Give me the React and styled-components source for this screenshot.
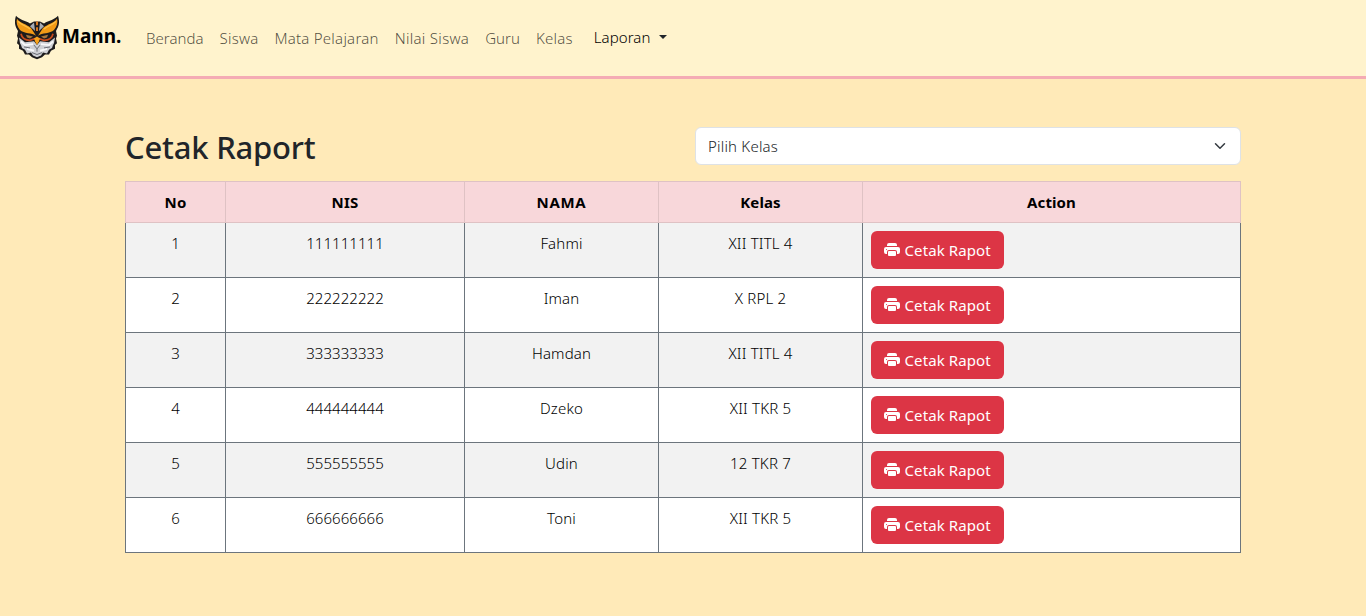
import React from "react";
import styled, { createGlobalStyle } from "styled-components";
import { BsPrinterFill } from "react-icons/bs";

const GlobalStyle = createGlobalStyle`
  *, *::before, *::after { box-sizing: border-box; }
  body {
    margin: 0;
    min-height: 100vh;
    background: #ffeab8;
    color: #212529;
    font-family: "Noto Sans", "Open Sans", sans-serif;
    font-size: 15px;
    line-height: 24px;
  }
`;

const Navbar = styled.nav`
  display: flex;
  align-items: center;
  height: 79px;
  padding: 0 12px;
  background: #fff3cd;
  border-bottom: 3px solid #f4abb4;
`;

const Brand = styled.a`
  display: flex;
  align-items: center;
  width: 126px;
  color: #000;
  font-size: 19px;
  font-weight: 700;
  line-height: 30px;
`;

const BrandName = styled.span`
  margin-top: -4px;
`;

const NavList = styled.ul`
  display: flex;
  list-style: none;
  margin: 0;
  padding: 0;
`;

const NavLink = styled.a`
  display: block;
  padding: 8px;
  color: rgba(0, 0, 0, 0.7);
  font-weight: 350;
  white-space: nowrap;
  letter-spacing: ${(p) => p.$spacing || 0}px;
`;

const Dropdown = styled.button`
  display: flex;
  align-items: center;
  margin: 0 0 2px 5px;
  padding: 6px 8px;
  border: 0;
  background: none;
  color: #000;
  font: inherit;
  font-weight: 350;
  letter-spacing: 0.08px;
`;

const Caret = styled.span`
  margin-left: 8.5px;
  border-top: 4.8px solid #212529;
  border-left: 4.8px solid transparent;
  border-right: 4.8px solid transparent;
`;

const Container = styled.main`
  width: 1116px;
  margin: 48px auto 0;
`;

const Toolbar = styled.div`
  display: grid;
  grid-template-columns: 546px 546px;
  column-gap: 24px;
  height: 54px;
`;

const Title = styled.h2`
  margin: 0;
  padding-top: 1px;
  font-size: 31px;
  font-weight: 500;
  line-height: 38px;
  letter-spacing: -0.22px;
`;

const Select = styled.div`
  display: flex;
  align-items: center;
  justify-content: space-between;
  height: 38px;
  padding: 0 12px;
  border: 1px solid #dee2e6;
  border-radius: 6px;
  background: #fff;
  font-weight: 350;
  letter-spacing: 0.2px;
`;

const Table = styled.table`
  width: 1116px;
  table-layout: fixed;
  border-collapse: collapse;
  text-align: center;
`;

const HeadCell = styled.th`
  height: 41px;
  padding: 8px;
  border: 1px solid #dfc2c4;
  background: #f8d7da;
  color: #000;
  font-weight: 700;
  letter-spacing: ${(p) => p.$spacing || 0}px;
`;

const Row = styled.tr`
  background: #fff;
  &:nth-child(odd) { background: #f2f2f2; }
`;

const Cell = styled.td`
  height: 55px;
  padding: ${(p) => (p.$action ? "8px" : "8px 8px 22px")};
  border: 1px solid #6c757d;
  color: #000;
  font-weight: 350;
  letter-spacing: ${(p) => p.$spacing || 0}px;
  text-align: ${(p) => (p.$action ? "left" : "center")};
  vertical-align: top;
`;

const PrintButton = styled.button`
  display: flex;
  align-items: center;
  width: 133px;
  height: 38px;
  padding: 0 13px;
  border: 0;
  border-radius: 6px;
  background: #dc3545;
  color: #fff;
  font: inherit;
  font-weight: 400;
  letter-spacing: 0.1px;
  white-space: nowrap;

  svg {
    flex: none;
    margin: -1px 4.5px 0 0;
  }
`;

const LINKS = [
  ["Beranda", 0.03],
  ["Siswa", 0.2],
  ["Mata Pelajaran", 0.24],
  ["Nilai Siswa", 0.3],
  ["Guru", 0.05],
  ["Kelas", 0.2],
];

const COLUMNS = [
  ["No", 100, 0.2],
  ["NIS", 239, 0.2],
  ["NAMA", 194, 0.7],
  ["Kelas", 204, 0.1],
  ["Action", 378, 0.1],
];

const STUDENTS = [
  ["111111111", "Fahmi", "XII TITL 4"],
  ["222222222", "Iman", "X RPL 2"],
  ["333333333", "Hamdan", "XII TITL 4"],
  ["444444444", "Dzeko", "XII TKR 5"],
  ["555555555", "Udin", "12 TKR 7"],
  ["666666666", "Toni", "XII TKR 5"],
];

function OwlLogo() {
  return (
    <svg width="50" height="50" viewBox="0 0 50 53" preserveAspectRatio="none" aria-hidden="true">
      <path d="M4 3c3 4 9 5 14 8l4-2h6l4 2c5-3 11-4 14-8 2 7 1 11-2 16l1 5-1 3 1 5-2 2 0 4-4 2-2 4-4 0-3 3-5 2-5-2-3-3-4 0-2-4-4-2 0-4-2-2 1-5-1-3 1-5C3 14 2 10 4 3z" fill="#1d1b1c" />
      <path d="M7 26l6 5 9-1 3 4 3-4 9 1 6-5-1 6-1 2-1 3-3 2-2 4-4-1-2 3-4 2-4-2-2-3-4 1-2-4-3-2-1-3-1-2z" fill="#cfd0d5" />
      <path d="M9 30l4 4 8-1M41 30l-4 4-8-1M15 38l7 2M35 38l-7 2" fill="none" stroke="#f8f8fa" strokeWidth="2" />
      <path d="M18 14l4-4 1 9zM32 14l-4-4-1 9z" fill="#a9adb6" />
      <path d="M5 6c3 5 9 5 14 10l5 8c-4-3-12-2-16-6C5 14 4 10 5 6z" fill="#f29a16" />
      <path d="M45 6c-3 5-9 5-14 10l-5 8c4-3 12-2 16-6 3-4 4-8 3-12z" fill="#f29a16" />
      <path d="M6 9c3 4 8 4 12 8M44 9c-3 4-8 4-12 8" fill="none" stroke="#ffc044" strokeWidth="1.3" />
      <path d="M24 9h2v4h-2zM24 15h2v4h-2z" fill="#d97720" />
      <path d="M9 22c1 5 4 7 9 7l5-2M41 22c-1 5-4 7-9 7l-5-2" fill="none" stroke="#c74a1c" strokeWidth="1.7" />
      <path d="M14 23l7 2-3 2-3-1zM36 23l-7 2 3 2 3-1z" fill="#a7753b" />
      <path d="M22 27l3-2 3 2-1 3-2 4-2-4z" fill="#f7a21c" />
      <path d="M22 34l3 4 3-4M12 36l6 1M38 36l-6 1M20 42l5 2 5-2M25 38v3" fill="none" stroke="#5c5e66" strokeWidth="0.9" />
    </svg>
  );
}

export default function App() {
  return (
    <>
      <GlobalStyle />
      <Navbar>
        <Brand>
          <OwlLogo />
          <BrandName>Mann.</BrandName>
        </Brand>
        <NavList>
          {LINKS.map(([label, spacing]) => (
            <li key={label}>
              <NavLink $spacing={spacing}>{label}</NavLink>
            </li>
          ))}
        </NavList>
        <Dropdown type="button">
          Laporan
          <Caret />
        </Dropdown>
      </Navbar>
      <Container>
        <Toolbar>
          <Title>Cetak Raport</Title>
          <Select role="combobox">
            Pilih Kelas
            <svg width="16" height="12" viewBox="0 0 16 16" fill="none" stroke="#343a40" strokeWidth="2" strokeLinecap="round" strokeLinejoin="round">
              <path d="m2 5 6 6 6-6" />
            </svg>
          </Select>
        </Toolbar>
        <Table>
          <colgroup>
            {COLUMNS.map(([name, width]) => (
              <col key={name} width={width} />
            ))}
          </colgroup>
          <thead>
            <tr>
              {COLUMNS.map(([name, , spacing]) => (
                <HeadCell key={name} $spacing={spacing}>
                  {name}
                </HeadCell>
              ))}
            </tr>
          </thead>
          <tbody>
            {STUDENTS.map(([nis, name, room], index) => (
              <Row key={nis}>
                <Cell>{index + 1}</Cell>
                <Cell $spacing={0.05}>{nis}</Cell>
                <Cell $spacing={0.15}>{name}</Cell>
                <Cell $spacing={0.2}>{room}</Cell>
                <Cell $action>
                  <PrintButton type="button">
                    <BsPrinterFill size={16} />
                    Cetak Rapot
                  </PrintButton>
                </Cell>
              </Row>
            ))}
          </tbody>
        </Table>
      </Container>
    </>
  );
}
